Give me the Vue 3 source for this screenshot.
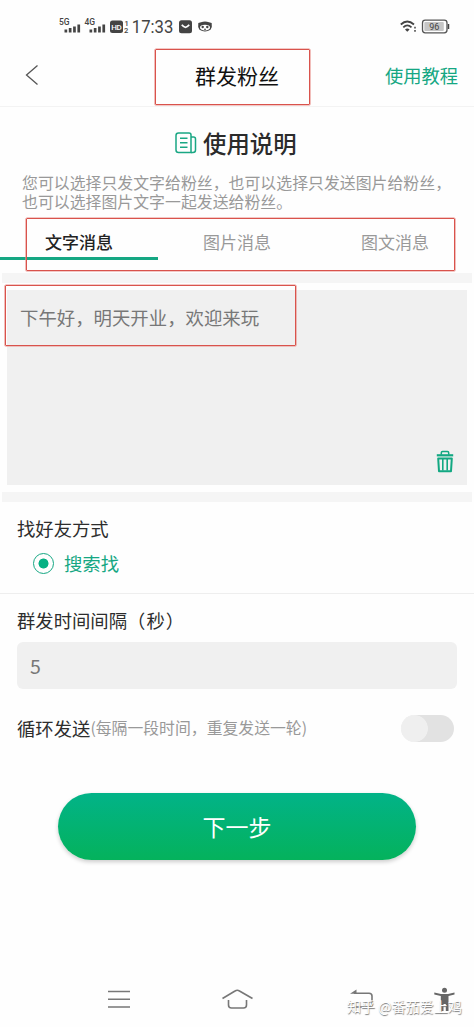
<script setup>
import { ref } from 'vue'

const tabs = ['文字消息', '图片消息', '图文消息']
const active = ref(0)
const bars = [3, 4.5, 6, 8]
</script>

<template>
  <main class="screen">
    <header class="status">
      <svg class="status-left" viewBox="0 0 170 36" width="170" height="36">
        <g fill="#444" font-family="Roboto, sans-serif">
          <text x="9" y="16.5" font-size="8.5" font-weight="500">5G</text>
          <text x="34.5" y="16.5" font-size="8.5" font-weight="500">4G</text>
          <g v-for="x in [14.5, 39.5]" :key="x">
            <rect v-for="(h, i) in bars" :key="i" :x="x + i * 4.3" :y="24.5 - h" width="2.7" :height="h" />
          </g>
          <rect x="60" y="12.5" width="13" height="12.5" rx="2.5" />
          <text x="61.3" y="22" font-size="8" font-weight="500" fill="#fff" textLength="10.5">HD</text>
          <text x="74.5" y="17.5" font-size="7.5" font-weight="500">1</text>
          <text x="74" y="25" font-size="7.5" font-weight="500">2</text>
          <text x="81.8" y="25" font-size="18" textLength="41.5" lengthAdjust="spacingAndGlyphs">17:33</text>
          <rect x="129" y="12.3" width="13" height="13" rx="2.5" />
          <path d="M131.8 16.8Q135.5 21.8 139.2 16.8" fill="none" stroke="#fff" stroke-width="1.7" />
          <path d="M148.3 15L151 14.3Q155 12.8 159 14.3L161.7 15Q162.5 19 160.5 21.8Q155 25 149.5 21.8Q147.5 19 148.3 15Z" />
          <ellipse cx="155" cy="19.6" rx="5" ry="2.8" fill="#fff" />
          <circle cx="152.7" cy="19" r="1.2" />
          <circle cx="157.3" cy="19" r="1.2" />
          <path d="M154 20.8h2v1h-2z" />
        </g>
      </svg>
      <svg class="status-right" viewBox="0 0 60 36" width="60" height="36">
        <g fill="none" stroke="#444" stroke-width="1.8">
          <path d="M.8 16.5Q7.2 10.5 14 16.5M3.3 19.3Q7.2 15.5 11.5 19.3" />
          <path d="M5 21.5Q7.3 19.5 9.6 21.5L7.3 23.8Z" fill="#444" stroke="none" />
          <path d="M15 18.8v1.7M15 22v1.7" stroke-width="1.5" />
          <rect x="22.5" y="12.2" width="24.5" height="12.6" rx="2.7" stroke="#555" stroke-width="1.3" />
          <path d="M48.5 16v5" stroke-width="1.5" />
        </g>
        <rect x="24.3" y="14" width="19.5" height="9" rx="1" fill="#c6c6c6" />
        <text x="29.3" y="21.8" font-family="Roboto, sans-serif" font-size="9" font-weight="400" fill="#444">96</text>
      </svg>
    </header>

    <nav class="nav">
      <svg class="back" viewBox="0 0 14 22" width="14" height="22">
        <path d="M12.5 1.5L1.5 11L12.5 20.5" fill="none" stroke="#555" stroke-width="1.3" />
      </svg>
      <h1>群发粉丝</h1>
      <a class="tutorial">使用教程</a>
      <i class="mark mark-title"></i>
    </nav>

    <section class="intro">
      <h2>
        <svg viewBox="0 0 22 22" width="22" height="22" fill="none" stroke="#1aa784" stroke-width="1.5">
          <path d="M3.5 1H14Q16 1 16 3V20.5H3.5Q1 20.5 1 18V3.5Q1 1 3.5 1Z" />
          <path d="M16 5H18.5Q20.5 5 20.5 7V18Q20.5 20.5 18 20.5H16" />
          <path d="M5 6.3h7.5M5 10.7h7.5M5 15.2h7.5" />
        </svg>
        <span>使用说明</span>
      </h2>
      <p>您可以选择只发文字给粉丝，也可以选择只发送图片给粉丝，<br />也可以选择图片文字一起发送给粉丝。</p>
    </section>

    <div class="tabs">
      <button v-for="(tab, i) in tabs" :key="tab" :class="{ active: i === active }" @click="active = i">{{ tab }}</button>
      <i class="mark mark-tabs"></i>
    </div>

    <section class="message">
      <div class="editor">
        <span>下午好，明天开业，欢迎来玩</span>
        <svg class="trash" viewBox="0 0 18 23" width="18" height="23" fill="none" stroke="#12a882">
          <path d="M.8 5.3h16.4" stroke-width="2.2" />
          <path d="M5.3 4.8V2.7Q5.3 1.5 6.5 1.5H11.5Q12.7 1.5 12.7 2.7V4.8" stroke-width="1.5" />
          <path d="M2.2 8.5H15.8L15 21.3H3Z" stroke-width="2" stroke-linejoin="round" />
          <path d="M6.8 8.5v12M11.2 8.5v12" stroke-width="1.6" />
        </svg>
        <i class="mark mark-message"></i>
      </div>
    </section>

    <section class="method">
      <div class="label">找好友方式</div>
      <label class="option"><i class="radio"></i><span>搜索找</span></label>
    </section>

    <section class="timing">
      <div class="label">群发时间间隔<span class="unit">（秒）</span></div>
      <div class="field">5</div>
      <div class="loop">
        <span class="label">循环发送</span>
        <span class="hint">(每隔一段时间，重复发送一轮)</span>
        <i class="toggle"></i>
      </div>
    </section>

    <button class="next">下一步</button>

    <footer class="system">
      <svg viewBox="0 0 474 52" width="474" height="52" fill="none" stroke="#777" stroke-width="1.6">
        <path d="M108 16.5h22M108 24.3h22M108 32h22" />
        <path d="M222.5 23.5L235 16Q237.3 14.5 239.5 16L252.5 23.5M228.5 25V30Q228.5 33 231.5 33H243.5Q246.5 33 246.5 30V25" />
        <path d="M354 18.3H369Q372 18.3 372 21V29Q372 32 369 32H354" />
        <path d="M350 18.7L356.5 14.5V18.7Z" fill="#777" stroke="none" />
        <g fill="#666" stroke="none">
          <circle cx="444.5" cy="15.2" r="2.5" />
          <path d="M434.3 17.5L441 19H448L454.5 17.5V19.5L448.5 21V36H445.8V29H443.5V36H440.8V21L434.3 19.5Z" />
        </g>
      </svg>
      <span class="watermark">知乎 @番茄爱上鸡</span>
    </footer>
  </main>
</template>

<style>
body {
  margin: 0;
  background: #fefefe;
}
</style>

<style scoped>
* {
  box-sizing: border-box;
}
.screen {
  width: 474px;
  height: 1027px;
  display: flex;
  flex-direction: column;
  overflow: hidden;
  background: #fefefe;
  color: #2b2b2b;
  font-family: "Noto Sans CJK SC", sans-serif;
}
button {
  border: 0;
  padding: 0;
  background: none;
  font-family: inherit;
}
svg {
  display: block;
  flex: none;
}
.status {
  height: 44px;
  padding: 8px 4px 0 50px;
  display: flex;
  justify-content: space-between;
}
.status-right {
  margin-right: 10px;
}
.nav {
  position: relative;
  height: 63px;
  padding: 0 16px 0 25px;
  border-bottom: 1px solid #f3f3f3;
  display: grid;
  grid-template-columns: 170px auto 1fr;
  align-items: center;
}
h1 {
  margin: 0;
  font-size: 21px;
  line-height: 30px;
  font-weight: 400;
  color: #111;
}
.tutorial {
  justify-self: end;
  font-size: 18.3px;
  line-height: 26px;
  color: #15a783;
}
.mark {
  position: absolute;
  border: 1px solid #d9534c;
  border-radius: 1px;
  box-shadow: 0 0 0 0.6px #e8928d;
  pointer-events: none;
}
.mark-title {
  left: 155px;
  top: 5px;
  width: 155px;
  height: 56px;
}
.intro {
  height: 111px;
  padding-top: 19px;
}
h2 {
  margin: 0;
  height: 34px;
  padding-left: 175px;
  display: flex;
  align-items: center;
  gap: 6px;
  font-size: 23.4px;
  line-height: 34px;
  font-weight: 500;
}
p {
  margin: 15px 0 0 22px;
  font-family: "Liberation Sans", "Noto Sans CJK SC", sans-serif;
  font-size: 15.9px;
  line-height: 18.5px;
  color: #999;
  white-space: nowrap;
}
.tabs {
  position: relative;
  height: 55px;
  display: grid;
  grid-template-columns: repeat(3, 158px);
}
.tabs button {
  height: 42px;
  padding-top: 6px;
  border-bottom: 3px solid transparent;
  font-size: 17px;
  line-height: 36px;
  color: #999;
}
.tabs .active {
  border-color: #15a783;
  color: #222;
  font-weight: 500;
}
.mark-tabs {
  left: 26px;
  top: 0;
  width: 429px;
  height: 53px;
}
.message {
  margin: 0 2px;
  padding: 7px 5px;
  height: 229px;
  border: solid #f5f5f5;
  border-width: 10px 0;
}
.editor {
  position: relative;
  width: 460px;
  height: 195px;
  padding: 14px 13px;
  background: #f0f0f0;
  font-size: 18.4px;
  line-height: 26px;
  color: #777;
}
.trash {
  position: absolute;
  right: 13px;
  bottom: 12px;
}
.mark-message {
  left: -2px;
  top: -5px;
  width: 291px;
  height: 61px;
}
.method {
  height: 92px;
  padding: 13px 17px 0;
  border-bottom: 1px solid #eee;
}
.label {
  font-size: 18.35px;
  line-height: 26px;
  color: #2d2d2d;
}
.unit {
  letter-spacing: 1px;
}
.option {
  display: flex;
  align-items: center;
  gap: 10px;
  margin: 8px 0 0 16px;
  font-size: 18.35px;
  line-height: 28px;
  color: #15a783;
}
.radio {
  width: 21px;
  height: 21px;
  border: 1px solid #15a783;
  border-radius: 50%;
  background: radial-gradient(circle, #06b083 4.7px, transparent 5.3px);
}
.timing {
  padding: 13px 17px 0;
}
.field {
  height: 47px;
  margin-top: 9px;
  padding-left: 13px;
  border-radius: 6px;
  background: #f0f0f0;
  font-size: 19.5px;
  line-height: 48px;
  color: #777;
}
.loop {
  display: flex;
  align-items: center;
  height: 28px;
  margin-top: 25px;
}
.hint {
  font-size: 15.85px;
  line-height: 26px;
  color: #999;
}
.toggle {
  width: 53px;
  height: 27px;
  margin: 0 3px 0 auto;
  border-radius: 14px;
  background: radial-gradient(circle at 13.5px 50%, #efefef 13px, #e2e2e2 13.7px);
}
.next {
  width: 358px;
  height: 67px;
  margin: 51px 0 0 58px;
  border-radius: 34px;
  background: linear-gradient(#02b388, #04b25c);
  box-shadow: 0 2px 4px #0003;
  color: #fff;
  font-size: 23px;
  line-height: 67px;
}
.system {
  position: relative;
  height: 52px;
  margin-top: auto;
}
.watermark {
  position: absolute;
  left: 347px;
  top: 20px;
  font-size: 14.1px;
  line-height: 22px;
  color: #fff;
  text-shadow: 0.5px 0.5px 1px #777;
  white-space: nowrap;
}
</style>
